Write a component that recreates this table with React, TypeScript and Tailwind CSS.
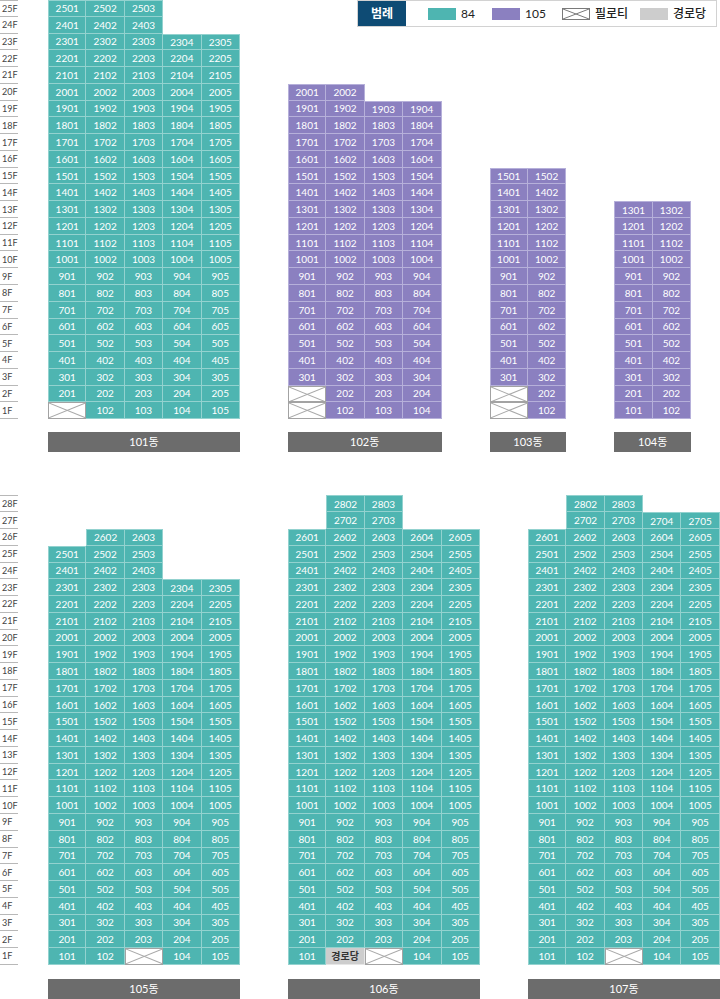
import React from 'react'
import clsx from 'clsx'

type Cell = { kind: 'unit'; no: number } | { kind: 'pilotis' } | { kind: 'hall' } | null

interface Building {
  name: string
  top: number
  cols: number
  tone: 'teal' | 'purple'
  cell: (floor: number, col: number) => Cell
}

const unit = (floor: number, col: number): Cell => ({ kind: 'unit', no: floor * 100 + col })

const upper: Building[] = [
  {
    name: '101동',
    top: 25,
    cols: 5,
    tone: 'teal',
    cell: (f, c) => {
      if (f >= 24 && c > 3) return null
      if (f === 1 && c === 1) return { kind: 'pilotis' }
      return unit(f, c)
    }
  },
  {
    name: '102동',
    top: 20,
    cols: 4,
    tone: 'purple',
    cell: (f, c) => {
      if (f === 20 && c > 2) return null
      if (f <= 2 && c === 1) return { kind: 'pilotis' }
      return unit(f, c)
    }
  },
  {
    name: '103동',
    top: 15,
    cols: 2,
    tone: 'purple',
    cell: (f, c) => {
      if (f <= 2 && c === 1) return { kind: 'pilotis' }
      return unit(f, c)
    }
  },
  {
    name: '104동',
    top: 13,
    cols: 2,
    tone: 'purple',
    cell: (f, c) => unit(f, c)
  }
]

const lower: Building[] = [
  {
    name: '105동',
    top: 26,
    cols: 5,
    tone: 'teal',
    cell: (f, c) => {
      if (f === 26 && (c === 1 || c > 3)) return null
      if (f >= 24 && c > 3) return null
      if (f === 1 && c === 3) return { kind: 'pilotis' }
      return unit(f, c)
    }
  },
  {
    name: '106동',
    top: 28,
    cols: 5,
    tone: 'teal',
    cell: (f, c) => {
      if (f >= 27 && (c === 1 || c > 3)) return null
      if (f === 1 && c === 2) return { kind: 'hall' }
      if (f === 1 && c === 3) return { kind: 'pilotis' }
      return unit(f, c)
    }
  },
  {
    name: '107동',
    top: 28,
    cols: 5,
    tone: 'teal',
    cell: (f, c) => {
      if (f === 28 && (c === 1 || c > 3)) return null
      if (f === 27 && c === 1) return null
      if (f === 1 && c === 3) return { kind: 'pilotis' }
      return unit(f, c)
    }
  }
]

const Cross = ({ color }: { color: string }) => (
  <svg className="absolute inset-0 h-full w-full" viewBox="0 0 100 100" preserveAspectRatio="none">
    <line x1="0" y1="0" x2="100" y2="100" stroke={color} strokeWidth="1" vectorEffect="non-scaling-stroke" />
    <line x1="100" y1="0" x2="0" y2="100" stroke={color} strokeWidth="1" vectorEffect="non-scaling-stroke" />
  </svg>
)

const range = (from: number, to: number) => {
  const out: number[] = []
  for (let i = from; i >= to; i--) out.push(i)
  return out
}

const BuildingBlock = ({ b, gap }: { b: Building; gap: 'upper' | 'lower' }) => {
  const floors = range(b.top, 1)
  const cols = Array.from({ length: b.cols }, (_, i) => i + 1)

  return (
    <div className="flex flex-col">
      {floors.map((f) => (
        <div key={f} className="flex h-[16.77px]">
          {cols.map((c) => {
            const cell = b.cell(f, c)
            if (!cell) return <div key={c} className="h-full w-[38.4px]" />

            const above = f === b.top ? null : b.cell(f + 1, c)
            const left = c === 1 ? null : b.cell(f, c - 1)

            if (cell.kind === 'pilotis') {
              return (
                <div key={c} className="relative h-full w-[38.4px] border border-[#a3a3a3] bg-white">
                  <Cross color="#a9a9a9" />
                </div>
              )
            }

            if (cell.kind === 'hall') {
              return (
                <div
                  key={c}
                  className="flex h-full w-[38.4px] items-center justify-center border-r border-b border-[#e6e6e6] bg-[#cdcdcd] text-[10px] font-bold leading-none text-[#333]"
                >
                  경로당
                </div>
              )
            }

            return (
              <div
                key={c}
                className={clsx(
                  'flex h-full w-[38.4px] items-center justify-center border-r border-b text-[10px] leading-none text-white',
                  b.tone === 'teal' ? 'bg-[#4eb5b1] border-[#93d2cf]' : 'bg-[#8b80c0] border-[#b6b0da]',
                  !above && 'border-t',
                  !left && 'border-l'
                )}
              >
                {cell.no}
              </div>
            )
          })}
        </div>
      ))}
      <div
        className={clsx(
          'flex h-[20px] items-center justify-center bg-[#6c6c6c] text-[11px] text-white',
          gap === 'upper' ? 'mt-[13px]' : 'mt-[14px]'
        )}
      >
        {b.name}
      </div>
    </div>
  )
}

const FloorColumn = ({ top, gap }: { top: number; gap: 'upper' | 'lower' }) => (
  <div className="flex w-[18px] flex-col">
    {range(top, 1).map((f, i) => (
      <div
        key={f}
        className={clsx(
          'flex h-[16.77px] items-center border-b border-[#b8b8b8] pl-[2px] text-[9px] leading-none text-[#444]',
          i === 0 && 'border-t'
        )}
      >
        {f}F
      </div>
    ))}
    <div className={gap === 'upper' ? 'h-[33px]' : 'h-[34px]'} />
  </div>
)

const Legend = () => (
  <div className="absolute left-[357px] top-0 flex h-[27px] w-[360px] items-center border border-[#d2d2d2] bg-white text-[12px] text-[#222]">
    <div className="flex h-full w-[48px] items-center justify-center bg-[#0e4b74] text-[12px] font-bold text-white">
      범례
    </div>
    <div className="ml-[22px] flex w-[64px] items-center">
      <span className="h-[12px] w-[28px] bg-[#4eb5b1]" />
      <span className="ml-[5px]">84</span>
    </div>
    <div className="flex w-[70px] items-center">
      <span className="h-[12px] w-[28px] bg-[#8b80c0]" />
      <span className="ml-[5px]">105</span>
    </div>
    <div className="flex w-[78px] items-center">
      <span className="relative h-[12px] w-[28px] border border-[#7a7a7a]">
        <Cross color="#7a7a7a" />
      </span>
      <span className="ml-[5px] font-medium">필로티</span>
    </div>
    <div className="flex items-center">
      <span className="h-[12px] w-[28px] bg-[#cdcdcd]" />
      <span className="ml-[5px] font-medium">경로당</span>
    </div>
  </div>
)

export default function App() {
  return (
    <div className="relative h-[999px] w-[720px] overflow-hidden bg-white font-['Lato','Noto_Sans_CJK_KR',sans-serif]">
      <Legend />

      <div className="flex items-end">
        <FloorColumn top={25} gap="upper" />
        <div className="ml-[30px] flex items-end gap-[48px]">
          {upper.map((b) => (
            <BuildingBlock key={b.name} b={b} gap="upper" />
          ))}
        </div>
      </div>

      <div className="mt-[43.3px] flex items-end">
        <FloorColumn top={28} gap="lower" />
        <div className="ml-[30px] flex items-end gap-[48px]">
          {lower.map((b) => (
            <BuildingBlock key={b.name} b={b} gap="lower" />
          ))}
        </div>
      </div>
    </div>
  )
}
